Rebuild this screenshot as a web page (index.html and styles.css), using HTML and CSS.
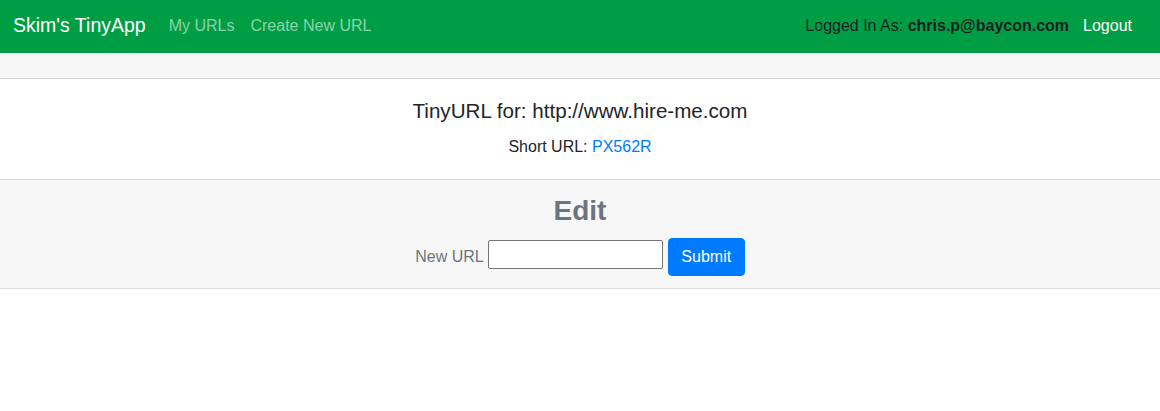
FILE: index.html
```html
<!DOCTYPE html>
<html lang="en">
<head>
<meta charset="utf-8">
<title>TinyApp</title>
<link rel="stylesheet" href="styles.css">
</head>
<body>
<nav class="navbar">
  <a class="brand" href="#">Skim's TinyApp</a>
  <div class="nav-links">
    <a class="nav-link" href="#">My URLs</a>
    <a class="nav-link" href="#">Create New URL</a>
  </div>
  <div class="nav-right">
    <span class="user">Logged In As: <b>chris.p@baycon.com</b></span>
    <a class="logout" href="#">Logout</a>
  </div>
</nav>
<main class="card">
  <div class="card-header"></div>
  <div class="card-body">
    <h5 class="card-title">TinyURL for: http://www.hire-me.com</h5>
    <p class="card-text">Short URL: <a class="short" href="#">PX562R</a></p>
  </div>
  <div class="card-footer">
    <h2 class="edit-title">Edit</h2>
    <form class="edit-form">
      <label class="label" for="newurl">New URL</label>
      <input class="url-input" id="newurl" type="text">
      <button class="btn" type="button">Submit</button>
    </form>
  </div>
</main>
</body>
</html>
```
FILE: styles.css
```css
* { box-sizing: border-box; }
html, body { margin: 0; padding: 0; }
body {
  font-family: "Liberation Sans", Arial, sans-serif;
  font-size: 16px;
  line-height: 1.5;
  color: #212529;
  background: #fff;
}
a { text-decoration: none; }
.navbar {
  height: 53px;
  background: #009e44;
  display: flex;
  align-items: center;
  padding: 0 28px 0 13px;
}
.brand {
  color: #fff;
  font-size: 19.5px;
  margin-right: 15px;
  padding-bottom: 2px;
}
.nav-links { display: flex; gap: 0; }
.nav-link {
  color: rgba(255,255,255,0.55);
  font-size: 16px;
  padding: 0 8px 1px;
}
.nav-right {
  margin-left: auto;
  display: flex;
  align-items: center;
  padding-bottom: 1px;
}
.user { color: #1b1e21; font-size: 16px; }
.user b { font-weight: 700; }
.logout { color: #fff; margin-left: 14px; font-size: 16px; }
.card {
  display: flex;
  flex-direction: column;
  border-bottom: 1px solid rgba(0,0,0,0.125);
}
.card-header {
  height: 26px;
  background: #f7f7f7;
  border-bottom: 1px solid rgba(0,0,0,0.125);
}
.card-body {
  padding: 20px;
  text-align: center;
}
.card-title {
  margin: 0 0 12px;
  font-size: 20.6px;
  font-weight: 400;
  line-height: 24px;
}
.card-text { margin: 0; font-size: 16px; line-height: 24px; }
.short { color: #007bff; }
.card-footer {
  background: #f7f7f7;
  border-top: 1px solid rgba(0,0,0,0.125);
  padding: 12px 20px;
  text-align: center;
}
.edit-title {
  margin: 0 0 8px;
  font-size: 28px;
  font-weight: 700;
  line-height: 38px;
  color: #6c757d;
}
.edit-form {
  display: flex;
  justify-content: center;
  align-items: center;
  color: #6c757d;
  font-size: 16px;
}
.label { margin-right: 4px; }
.url-input {
  width: 175px;
  height: 29px;
  border: 1px solid #767676;
  border-radius: 2px;
  background: #fff;
  margin-right: 5px;
  margin-top: -5px;
}
.btn {
  font-family: inherit;
  width: 77px;
  height: 38px;
  background: #007bff;
  color: #fff;
  border: 1px solid #007bff;
  border-radius: 4px;
  font-size: 16px;
}
```
